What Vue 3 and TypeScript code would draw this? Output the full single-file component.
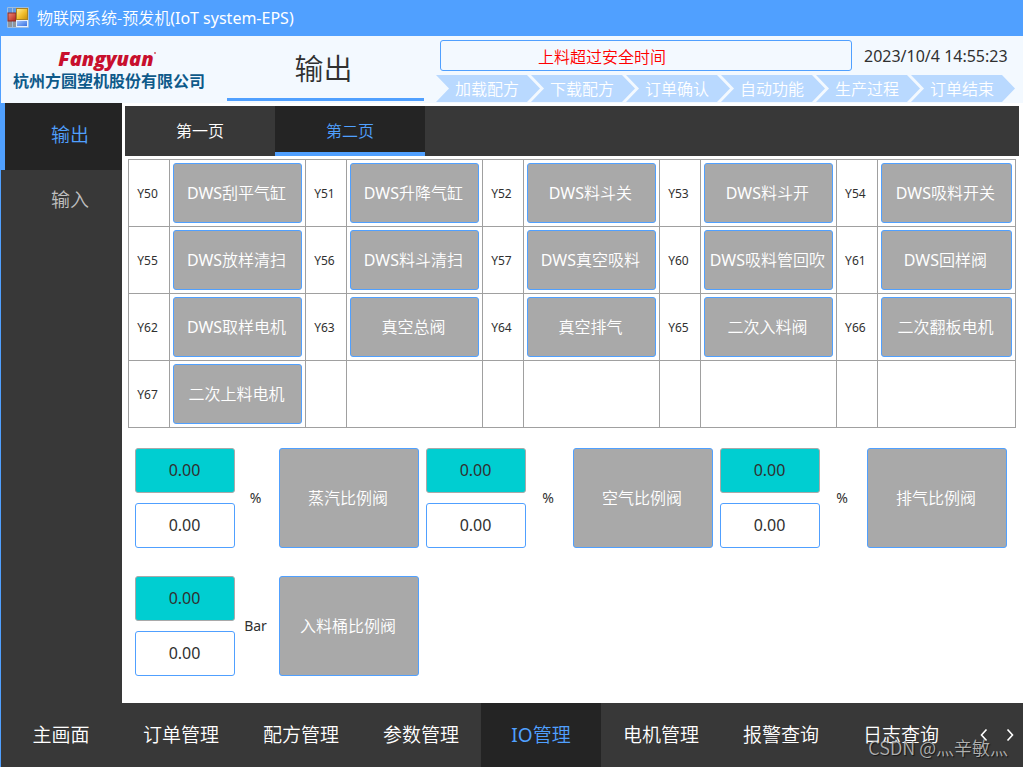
<script setup lang="ts">
import { ref } from 'vue'

interface Point {
  code: string
  prefix?: string
  name: string
}

interface Valve {
  id: string
  name: string
  unit: string
  actual: string
  target: string
}

interface MenuItem {
  prefix?: string
  name: string
}

const steps: string[] = ['加载配方', '下载配方', '订单确认', '自动功能', '生产过程', '订单结束']
const sections: string[] = ['输出', '输入']
const pages: string[] = ['第一页', '第二页']
const menu: MenuItem[] = [
  { name: '主画面' },
  { name: '订单管理' },
  { name: '配方管理' },
  { name: '参数管理' },
  { prefix: 'IO', name: '管理' },
  { name: '电机管理' },
  { name: '报警查询' },
  { name: '日志查询' },
]

const activeSection = ref('输出')
const activePage = ref('第二页')
const activeMenu = ref('管理')

const empty: Point = { code: '', name: '' }

const rows: Point[][] = [
  [
    { code: 'Y50', prefix: 'DWS', name: '刮平气缸' },
    { code: 'Y51', prefix: 'DWS', name: '升降气缸' },
    { code: 'Y52', prefix: 'DWS', name: '料斗关' },
    { code: 'Y53', prefix: 'DWS', name: '料斗开' },
    { code: 'Y54', prefix: 'DWS', name: '吸料开关' },
  ],
  [
    { code: 'Y55', prefix: 'DWS', name: '放样清扫' },
    { code: 'Y56', prefix: 'DWS', name: '料斗清扫' },
    { code: 'Y57', prefix: 'DWS', name: '真空吸料' },
    { code: 'Y60', prefix: 'DWS', name: '吸料管回吹' },
    { code: 'Y61', prefix: 'DWS', name: '回样阀' },
  ],
  [
    { code: 'Y62', prefix: 'DWS', name: '取样电机' },
    { code: 'Y63', name: '真空总阀' },
    { code: 'Y64', name: '真空排气' },
    { code: 'Y65', name: '二次入料阀' },
    { code: 'Y66', name: '二次翻板电机' },
  ],
  [{ code: 'Y67', name: '二次上料电机' }, empty, empty, empty, empty],
]

const valves = ref<Valve[]>([
  { id: 'steam', name: '蒸汽比例阀', unit: '%', actual: '0.00', target: '0.00' },
  { id: 'air', name: '空气比例阀', unit: '%', actual: '0.00', target: '0.00' },
  { id: 'exhaust', name: '排气比例阀', unit: '%', actual: '0.00', target: '0.00' },
  { id: 'barrel', name: '入料桶比例阀', unit: 'Bar', actual: '0.00', target: '0.00' },
])
</script>

<template>
  <div class="window">
    <div class="titlebar">
      <svg class="app-icon" viewBox="0 0 22 22" aria-hidden="true">
        <defs>
          <linearGradient id="gold" x1="0" y1="0" x2="1" y2="1">
            <stop offset="0" stop-color="#fff0a0" />
            <stop offset="0.5" stop-color="#f3c233" />
            <stop offset="1" stop-color="#c98e06" />
          </linearGradient>
          <linearGradient id="ruby" x1="0" y1="0" x2="1" y2="1">
            <stop offset="0" stop-color="#f08a78" />
            <stop offset="1" stop-color="#b02418" />
          </linearGradient>
          <linearGradient id="azure" x1="0" y1="0" x2="1" y2="1">
            <stop offset="0" stop-color="#a9caff" />
            <stop offset="1" stop-color="#2f6be0" />
          </linearGradient>
        </defs>
        <path d="M0.5 0.5H21.5V20.5H0.5Z" fill="#6e9bd0" stroke="#9dbde0" />
        <path d="M1 14h8v6H1z" fill="#8f969c" />
        <path d="M1 1h8v5H1z" fill="#5f9be6" />
        <path d="M5.500 1V20" stroke="#9dbde0" />
        <rect x="1" y="6" width="8" height="8" fill="url(#ruby)" stroke="#8c2a28" />
        <rect x="9.5" y="1.5" width="11" height="11" fill="url(#gold)" stroke="#a98325" />
        <rect x="9.5" y="13.500" width="11" height="6" fill="url(#azure)" stroke="#e4efff" />
      </svg>
      <span>物联网系统-预发机<span class="latin">(IoT system-EPS)</span></span>
    </div>

    <header class="header">
      <div class="brand">
        <span class="brand-en">Fangyuan<i class="brand-dot"></i></span>
        <span class="brand-cn">杭州方圆塑机股份有限公司</span>
      </div>
      <h1 class="heading">输出</h1>
      <div class="status">
        <div class="status-top">
          <div class="alarm" role="status">上料超过安全时间</div>
          <time class="clock" datetime="2023-10-04T14:55:23">2023/10/4 14:55:23</time>
        </div>
        <ol class="steps">
          <li v-for="step in steps" :key="step" class="step">{{ step }}</li>
        </ol>
      </div>
    </header>

    <div class="body">
      <nav class="sidebar">
        <button
          v-for="section in sections"
          :key="section"
          type="button"
          class="side-item"
          :class="{ active: section === activeSection }"
          @click="activeSection = section"
        >
          {{ section }}
        </button>
      </nav>

      <main class="content">
        <div class="tabs" role="tablist">
          <button
            v-for="page in pages"
            :key="page"
            type="button"
            role="tab"
            class="tab"
            :class="{ active: page === activePage }"
            :aria-selected="page === activePage"
            @click="activePage = page"
          >
            {{ page }}
          </button>
        </div>

        <table class="points">
          <colgroup>
            <template v-for="n in 5" :key="n">
              <col class="col-code" />
              <col :class="{ 'col-action': n < 5 }" />
            </template>
          </colgroup>
          <tbody>
            <tr v-for="(row, r) in rows" :key="r">
              <template v-for="(point, c) in row" :key="c">
                <td class="code">{{ point.code }}</td>
                <td class="cell">
                  <button v-if="point.name" type="button" class="action"><span class="latin">{{ point.prefix }}</span>{{ point.name }}</button>
                </td>
              </template>
            </tr>
          </tbody>
        </table>

        <section class="valves">
          <div v-for="valve in valves" :key="valve.id" class="valve">
            <div class="fields">
              <input class="field actual" type="text" readonly :value="valve.actual" :aria-label="valve.name + '实际值'" />
              <input v-model="valve.target" class="field" type="text" :aria-label="valve.name + '设定值'" />
            </div>
            <span class="unit">{{ valve.unit }}</span>
            <button type="button" class="action valve-button">{{ valve.name }}</button>
          </div>
        </section>
      </main>
    </div>

    <nav class="menu">
      <button
        v-for="item in menu"
        :key="item.name"
        type="button"
        class="menu-item"
        :class="{ active: item.name === activeMenu }"
        @click="activeMenu = item.name"
      ><span class="latin">{{ item.prefix }}</span>{{ item.name }}</button>
      <div class="scrollers">
        <button type="button" class="scroller" aria-label="向左">
          <svg viewBox="0 0 8 12" aria-hidden="true"><path d="M6.500 0.500L1.500 6L6.500 11.500" /></svg>
        </button>
        <button type="button" class="scroller" aria-label="向右">
          <svg viewBox="0 0 8 12" aria-hidden="true"><path d="M1.500 0.500L6.500 6L1.500 11.500" /></svg>
        </button>
      </div>
      <span class="credit">CSDN @灬辛敏灬</span>
    </nav>
  </div>
</template>

<style>
body {
  margin: 0;
  background: #ffffff;
}
</style>

<style scoped>
.window {
  box-sizing: border-box;
  display: flex;
  flex-direction: column;
  min-height: 100vh;
  border-left: 1px solid #50a0ff;
  background: #ffffff;
  color: #303030;
  font-family: "Noto Sans", "Noto Sans CJK SC", sans-serif;
  font-size: 16px;
  font-weight: 350;
  line-height: 24px;
}

button,
input {
  box-sizing: border-box;
  margin: 0;
  padding: 0;
  border: 0;
  font: inherit;
}

button {
  cursor: pointer;
}

.latin {
  font-weight: 400;
}

.titlebar {
  display: flex;
  align-items: center;
  gap: 8px;
  height: 36px;
  padding-left: 6px;
  margin-left: -1px;
  background: #50a0ff;
  color: #ffffff;
}

.app-icon {
  width: 22px;
  height: 22px;
  margin-left: 1px;
}

.header {
  display: flex;
  height: 67px;
  background: #f3f9ff;
}

.brand {
  display: flex;
  flex-direction: column;
  align-items: center;
  flex: none;
  box-sizing: border-box;
  width: 226px;
  padding: 12px 10px 0 0;
}

.brand-en {
  display: flex;
  padding-right: 4px;
  color: #c8102e;
  font-family: "Open Sans", sans-serif;
  font-size: 20px;
  font-style: italic;
  font-weight: 800;
  line-height: 22px;
}

.brand-dot {
  width: 2px;
  height: 2px;
  margin-top: 4px;
  border-radius: 1px;
  background: #d8505f;
}

.brand-cn {
  color: #0e5a8a;
  font-size: 16px;
  font-weight: 700;
  line-height: 22px;
  white-space: nowrap;
}

.heading {
  flex: none;
  box-sizing: border-box;
  width: 197px;
  height: 65px;
  margin: 0;
  padding-right: 4px;
  border-bottom: 3px solid #50a0ff;
  font-size: 29px;
  font-weight: 350;
  line-height: 66px;
  text-align: center;
}

.status {
  flex: 1;
  min-width: 0;
  padding: 4px 8px 0 12px;
}

.status-top {
  display: flex;
  align-items: center;
  padding-left: 4px;
}

.alarm {
  flex: 1;
  box-sizing: border-box;
  height: 31px;
  padding-right: 88px;
  border: 1px solid #50a0ff;
  border-radius: 3px;
  color: #ff0000;
  line-height: 32px;
  text-align: center;
}

.clock {
  width: 151px;
  padding-left: 12px;
  font-weight: 400;
  white-space: nowrap;
}

.steps {
  display: flex;
  margin: 4px 0 0;
  padding: 0 0 0 9px;
  list-style: none;
}

.step {
  flex: 1;
  box-sizing: border-box;
  height: 27px;
  margin-left: -9px;
  padding-right: 2px;
  background: #b9d9ff;
  clip-path: polygon(0 0, calc(100% - 13px) 0, 100% 50%, calc(100% - 13px) 100%, 0 100%, 13px 50%);
  color: #ffffff;
  line-height: 28px;
  text-align: center;
  white-space: nowrap;
}

.body {
  display: flex;
  flex: 1;
}

.sidebar {
  display: flex;
  flex-direction: column;
  flex: none;
  width: 121px;
  background: #383838;
}

.side-item {
  height: 59px;
  padding-left: 17px;
  background: transparent;
  color: #c0c0c0;
  font-size: 19px;
}

.side-item.active {
  height: 67px;
  padding: 0 0 3px 13px;
  border-left: 4px solid #50a0ff;
  background: #242424;
  color: #50a0ff;
}

.content {
  flex: 1;
  min-width: 0;
  padding: 3px 4px 0 3px;
}

.tabs {
  display: flex;
  height: 50px;
  background: #383838;
}

.tab {
  width: 150px;
  border-top: 3px solid transparent;
  border-bottom: 4px solid transparent;
  background: #383838;
  color: #ffffff;
}

.tab.active {
  border-top-color: #242424;
  border-bottom-color: #50a0ff;
  background: #242424;
  color: #50a0ff;
}

.points {
  width: calc(100% - 6px);
  margin: 3px 3px 0;
  border-collapse: collapse;
  table-layout: fixed;
}

.col-code {
  width: 41px;
}

.col-action {
  width: 15.33%;
}

.points td {
  box-sizing: border-box;
  height: 67px;
  padding: 3px;
  border: 1px solid #a0a0a0;
}

.points .code {
  padding: 2px 3px 0 0;
  font-size: 12px;
  font-weight: 400;
  text-align: center;
}

.action {
  display: block;
  width: 100%;
  height: 60px;
  padding-right: 2px;
  border: 1px solid #50a0ff;
  border-radius: 3px;
  background: #a9a9a9;
  color: #ffffff;
  white-space: nowrap;
}

.valves {
  display: grid;
  grid-template-columns: 284fr 287fr 287fr;
  gap: 28px 7px;
  padding: 20px 12px 27px 10px;
}

.valve {
  display: flex;
  align-items: center;
}

.fields {
  display: flex;
  flex-direction: column;
  gap: 10px;
  width: 100px;
}

.field {
  width: 100%;
  height: 45px;
  padding: 0 1px 2px 0;
  border: 1px solid #50a0ff;
  border-radius: 3px;
  background: #ffffff;
  color: #303030;
  font-weight: 400;
  text-align: center;
}

.field.actual {
  border-color: #a9a9a9;
  background: #00ced1;
}

.unit {
  flex: 1;
  padding-right: 3px;
  font-size: 14px;
  font-weight: 400;
  text-align: center;
}

.valve-button {
  flex: none;
  width: 140px;
  height: 100px;
}

.menu {
  position: relative;
  display: flex;
  height: 64px;
  background: #383838;
}

.menu-item {
  flex: 0 1 120px;
  background: transparent;
  color: #ffffff;
  font-size: 19px;
  white-space: nowrap;
}

.menu-item.active {
  background: #242424;
  color: #50a0ff;
}

.scrollers {
  display: flex;
  align-items: center;
  margin-left: auto;
}

.scroller {
  display: flex;
  align-items: center;
  justify-content: center;
  width: 26px;
  height: 26px;
  background: transparent;
}

.scroller svg {
  width: 8px;
  height: 12px;
  fill: none;
  stroke: #ffffff;
  stroke-width: 1.6;
}

.credit {
  position: absolute;
  right: 15px;
  bottom: 8px;
  color: rgba(200, 200, 200, 0.85);
  font-family: "Noto Sans CJK SC", sans-serif;
  font-size: 18px;
  text-shadow: 1px 1px 1px rgba(0, 0, 0, 0.6);
  pointer-events: none;
}
</style>
